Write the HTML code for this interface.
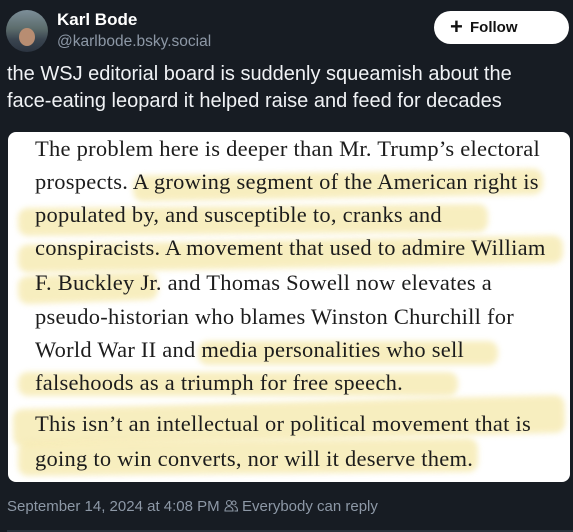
<!DOCTYPE html>
<html><head><style>
body{margin:0;width:573px;height:532px;background:#171c23;overflow:hidden;position:relative;font-family:"Liberation Sans",sans-serif;}
.a{position:absolute;}
.ln{position:absolute;left:35px;font-family:"Liberation Serif",serif;font-size:22.5px;letter-spacing:.25px;color:#1c1c1c;white-space:nowrap;z-index:2;}
.hl{position:absolute;background:#f6eab0;filter:blur(3px);opacity:.8;border-radius:10px;}
</style></head><body>
<div class="a" style="left:6px;top:10px;width:42px;height:42px;border-radius:50%;background:linear-gradient(#7d8f99 0%,#5b6b6b 45%,#3a4550 70%,#2c3440 100%);"></div>
<div class="a" style="left:19px;top:28px;width:16px;height:18px;border-radius:50%;background:#b88d72;"></div>
<div class="a" style="left:57px;top:10px;color:#fff;font-weight:bold;font-size:17px;">Karl Bode</div>
<div class="a" style="left:57px;top:33px;color:#8d98a6;font-size:15.5px;">@karlbode.bsky.social</div>
<div class="a" style="left:434px;top:11px;width:135px;height:33px;border-radius:17px;background:#fff;color:#111;font-weight:bold;font-size:15px;line-height:33px;"><span style="position:absolute;left:16px;font-size:22px;top:-1px;">+</span><span style="position:absolute;left:36px;">Follow</span></div>
<div class="a" style="left:7px;top:61px;color:#f0f2f5;font-size:20px;line-height:27px;">the WSJ editorial board is suddenly squeamish about the<br>face-eating leopard it helped raise and feed for decades</div>
<div class="a" style="left:8px;top:132px;width:562px;height:350px;background:#fff;border-radius:8px;overflow:hidden;">
<div class="hl" style="left:125px;top:40px;width:410px;height:26px;transform:rotate(-1deg)"></div>
<div class="hl" style="left:10px;top:74px;width:470px;height:28px;transform:rotate(-.5deg)"></div>
<div class="hl" style="left:10px;top:108px;width:545px;height:28px;transform:rotate(-1deg)"></div>
<div class="hl" style="left:10px;top:142px;width:140px;height:28px;transform:rotate(-2deg)"></div>
<div class="hl" style="left:190px;top:209px;width:300px;height:24px"></div>
<div class="hl" style="left:10px;top:240px;width:440px;height:24px"></div>
<div class="hl" style="left:5px;top:270px;width:552px;height:38px;transform:rotate(-1.5deg)"></div>
<div class="hl" style="left:10px;top:308px;width:460px;height:34px;transform:rotate(-.5deg)"></div>
</div>
<div class="ln" style="top:136px">The problem here is deeper than Mr. Trump’s electoral</div>
<div class="ln" style="top:169px">prospects. A growing segment of the American right is</div>
<div class="ln" style="top:202px">populated by, and susceptible to, cranks and</div>
<div class="ln" style="top:235px">conspiracists. A movement that used to admire William</div>
<div class="ln" style="top:270px">F. Buckley Jr. and Thomas Sowell now elevates a</div>
<div class="ln" style="top:304px">pseudo-historian who blames Winston Churchill for</div>
<div class="ln" style="top:337px">World War II and media personalities who sell</div>
<div class="ln" style="top:370px">falsehoods as a triumph for free speech.</div>
<div class="ln" style="top:411px">This isn’t an intellectual or political movement that is</div>
<div class="ln" style="top:446px">going to win converts, nor will it deserve them.</div>
<div class="a" style="left:7px;top:498px;color:#8d98a6;font-size:15px;white-space:nowrap;">September 14, 2024 at 4:08 PM <svg width="14" height="13" viewBox="0 0 14 13" style="vertical-align:-1px"><g fill="none" stroke="#8d98a6" stroke-width="1.1"><circle cx="5" cy="4" r="2.5"/><path d="M1 12c0-3 2-4.5 4-4.5s4 1.5 4 4.5z"/><circle cx="10" cy="4" r="2"/><path d="M10.5 7.5c2 0 3 1.5 3 4.5h-3"/></g></svg> Everybody can reply</div>
<div class="a" style="left:7px;top:530px;width:566px;height:2px;background:#2a323c;"></div>
</body></html>
